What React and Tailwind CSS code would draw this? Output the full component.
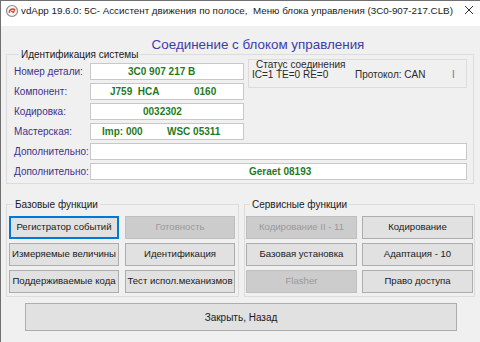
import React from "react";

function Btn({ children, kind = "normal", w = "w-[110px]" }) {
  if (kind === "focus")
    return (
      <div className={`${w} h-[23px] flex items-center justify-center whitespace-nowrap border border-[#0078d7] bg-[#e1e1e1] text-[9.6px] text-[#1a1a1a] shadow-[inset_0_0_0_1px_#0078d7]`}>
        {children}
      </div>
    );
  if (kind === "disabled")
    return (
      <div className={`${w} h-[23px] flex items-center justify-center whitespace-nowrap border border-[#bfbfbf] bg-[#cccccc] text-[9.6px] text-[#9a9a9a]`}>
        {children}
      </div>
    );
  return (
    <div className={`${w} h-[23px] flex items-center justify-center whitespace-nowrap border border-[#adadad] bg-[#e1e1e1] text-[9.6px] text-[#1a1a1a]`}>
      {children}
    </div>
  );
}

function Row({ label, wide, children }) {
  return (
    <div className="flex items-center h-[17px]">
      <div className="w-[76px] text-[10px] text-[#40308c] whitespace-nowrap">{label}</div>
      <div
        className={`${wide ? "w-[377px]" : "w-[154px]"} h-[17px] bg-white border border-[#c8c8c8] flex items-center text-[10px] font-bold text-[#1f7a1f] whitespace-pre`}
      >
        {children}
      </div>
    </div>
  );
}

export default function App() {
  return (
    <div className="w-[480px] h-[342px] overflow-hidden bg-[#f0f0f0] border-l border-t border-[#707070] font-['Liberation_Sans',Arial,sans-serif] flex flex-col">
      {/* Title bar */}
      <div className="h-[25px] bg-white flex items-start pt-[3px] shrink-0">
        <svg width="14" height="14" viewBox="0 0 14 14" className="ml-[4px]">
          <circle cx="7" cy="7" r="5.5" fill="#f4f4f4" stroke="#8a8a8a" strokeWidth="1.2" />
          <path d="M4.2 8.2 C4.5 5.2 8 4.2 9.6 5.6" fill="none" stroke="#d9432b" strokeWidth="1.4" strokeLinecap="round" />
          <path d="M9.6 5.6 L8.6 8.4 L6.6 7.4" fill="none" stroke="#d9432b" strokeWidth="1.2" strokeLinecap="round" strokeLinejoin="round" />
        </svg>
        <div className="ml-[2px] text-[9.8px] leading-[14px] text-[#1a1a1a] whitespace-pre">
          vdApp 19.6.0: 5C- Ассистент движения по полосе,  Меню блока управления (3C0-907-217.CLB)
        </div>
        <div className="ml-auto mr-[6px] mt-[1px]">
          <svg width="10" height="10" viewBox="0 0 10 10">
            <path d="M1 1 L9 9 M9 1 L1 9" stroke="#333" strokeWidth="1" />
          </svg>
        </div>
      </div>

      <div className="pl-[5px] flex flex-col">
        {/* Heading */}
        <div className="mt-[11px] h-[15px] flex justify-center pl-[30px]">
          <div className="text-[13.4px] leading-[15px] text-[#3d3da6] whitespace-nowrap">
            Соединение с блоком управления
          </div>
        </div>

        {/* Group 1 */}
        <fieldset className="-mt-[4px] w-[468px] border border-[#dcdcdc] pl-[7px] pb-[3px]">
          <legend className="ml-[5px] px-[2px] text-[10px] leading-[13px] text-[#1a1a1a]">
            Идентификация системы
          </legend>
          <div className="flex pt-[2px]">
            <div className="flex flex-col gap-[3px]">
              <Row label="Номер детали:">
                <span className="pl-[37px]">3C0 907 217 B</span>
              </Row>
              <Row label="Компонент:">
                <span className="w-[103px] pl-[19px]">J759  HCA</span>
                <span>0160</span>
              </Row>
              <Row label="Кодировка:">
                <span className="pl-[52px]">0032302</span>
              </Row>
              <Row label="Мастерская:">
                <span className="w-[76px] pl-[11px]">Imp: 000</span>
                <span>WSC 05311</span>
              </Row>
            </div>
            <div className="ml-[4px] -mt-[4px] w-[219px] h-[29px] border border-[#dcdcdc] text-[10px] leading-[10px] text-[#2a2a2a]">
              <div className="pl-[7px]">Статус соединения</div>
              <div className="flex pl-[3px]">
                <span className="w-[103px]">IC=1 TE=0 RE=0</span>
                <span className="w-[97px]">Протокол: CAN</span>
                <span className="text-[#777]">I</span>
              </div>
            </div>
          </div>
          <div className="flex flex-col gap-[3px] mt-[3px]">
            <Row label="Дополнительно:" wide />
            <Row label="Дополнительно:" wide>
              <span className="pl-[158px]">Geraet 08193</span>
            </Row>
          </div>
        </fieldset>

        {/* Groups 2 and 3 */}
        <div className="flex gap-[5px] mt-[14px]">
          <fieldset className="w-[233px] border border-[#dcdcdc] pl-[2px] pr-[2px] pb-[3px]">
            <legend className="ml-[4px] px-[2px] text-[10px] leading-[13px] text-[#1a1a1a]">
              Базовые функции
            </legend>
            <div className="grid grid-cols-[110px_110px] gap-x-[6px] gap-y-[4px] pt-[5px]">
              <Btn kind="focus">Регистратор событий</Btn>
              <Btn kind="disabled">Готовность</Btn>
              <Btn>Измеряемые величины</Btn>
              <Btn>Идентификация</Btn>
              <Btn>Поддерживаемые кода</Btn>
              <Btn>Тест испол.механизмов</Btn>
            </div>
          </fieldset>
          <fieldset className="w-[231px] border border-[#dcdcdc] pl-[1px] pr-[1px] pb-[3px]">
            <legend className="ml-[4px] px-[2px] text-[10px] leading-[13px] text-[#1a1a1a]">
              Сервисные функции
            </legend>
            <div className="grid grid-cols-[111px_111px] gap-x-[5px] gap-y-[4px] pt-[5px]">
              <Btn kind="disabled" w="w-[111px]">Кодирование II - 11</Btn>
              <Btn w="w-[111px]">Кодирование</Btn>
              <Btn w="w-[111px]">Базовая установка</Btn>
              <Btn w="w-[111px]">Адаптация - 10</Btn>
              <Btn kind="disabled" w="w-[111px]">Flasher</Btn>
              <Btn w="w-[111px]">Право доступа</Btn>
            </div>
          </fieldset>
        </div>

        {/* Close */}
        <div className="mt-[6px] ml-[19px] w-[432px] h-[28px] border border-[#adadad] bg-[#e1e1e1] flex items-center justify-center text-[10px] text-[#1a1a1a]">
          Закрыть, Назад
        </div>
      </div>
    </div>
  );
}
